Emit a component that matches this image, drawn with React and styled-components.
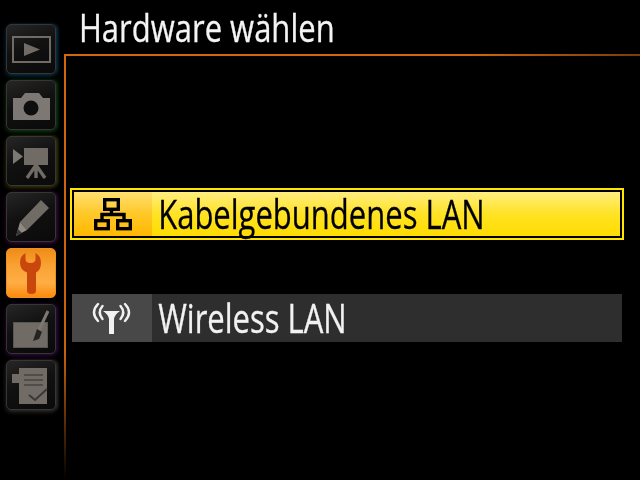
import React from 'react';
import styled, { createGlobalStyle, css } from 'styled-components';

const GlobalStyle = createGlobalStyle`
  html, body {
    margin: 0;
    padding: 0;
    background: #000;
    overflow: hidden;
  }
`;

const Screen = styled.div`
  width: 640px;
  height: 480px;
  display: flex;
  background: #000;
  font-family: "Open Sans", "Noto Sans", sans-serif;
`;

const Sidebar = styled.nav`
  width: 50px;
  padding: 24px 8px 0 6px;
  display: flex;
  flex-direction: column;
  gap: 6px;
`;

const Tab = styled.div`
  width: 50px;
  height: 50px;
  box-sizing: border-box;
  border-radius: 5px;
  border: 1px solid #383634;
  background: linear-gradient(160deg, #262626 0%, #111 45%, #0a0a0a 100%);
  box-shadow: 0 2px 4px ${(p) => p.$glow}, 2px 0 3px ${(p) => p.$glow};
  ${(p) => p.$active && css`
    border-color: #f09020;
    background: linear-gradient(180deg, #f08c18 0%, #f9a233 35%, #ffae45 70%, #fb8a0c 100%);
    box-shadow: none;
  `}
  svg { display: block; width: 48px; height: 48px; filter: blur(0.5px); }
`;

const Main = styled.main`
  flex: 1;
  display: flex;
  flex-direction: column;
`;

const Title = styled.h1`
  height: 54px;
  margin: 0;
  padding-left: 15px;
  box-sizing: border-box;
  color: #f4f4f4;
  font-size: 39px;
  font-weight: 400;
  line-height: 54px;
  white-space: nowrap;
  -webkit-text-stroke: 0.3px #f4f4f4;
  span {
    display: inline-block;
    transform: scaleX(0.795);
    transform-origin: left center;
  }
`;

const Panel = styled.section`
  flex: 1;
  padding: 134px 16px 0 6px;
  display: flex;
  flex-direction: column;
  gap: 54px;
  background:
    linear-gradient(90deg, #d2670f 0%, #d2670f 70%, #7a3c08 100%) top left / 100% 2px no-repeat,
    linear-gradient(180deg, #d2670f 0%, #c9620e 70%, #000 100%) top left / 2px 100% no-repeat;
`;

const SelectedFrame = styled.div`
  height: 52px;
  box-sizing: border-box;
  border: 2px solid #ffe500;
  background: #000;
  padding: 2px;
`;

const Row = styled.div`
  height: ${(p) => (p.$selected ? '44px' : '48px')};
  display: flex;
  align-items: stretch;
  margin: ${(p) => (p.$selected ? '0' : '0 2px')};
  background: ${(p) => (p.$selected
    ? 'linear-gradient(180deg, #ffed80 0%, #ffe324 50%, #ffdc00 100%)'
    : '#2e2e2e')};
`;

const IconCell = styled.div`
  width: ${(p) => (p.$selected ? '78px' : '80px')};
  flex: none;
  display: flex;
  align-items: center;
  justify-content: center;
  background: ${(p) => (p.$selected
    ? 'linear-gradient(180deg, #ffdf70 0%, #ffc828 50%, #ffb800 100%)'
    : '#484848')};
  svg { filter: blur(0.3px); }
`;

const Label = styled.span`
  display: inline-block;
  padding-left: 8px;
  color: ${(p) => (p.$selected ? '#000' : '#f2f2f2')};
  font-size: 40px;
  line-height: ${(p) => (p.$selected ? '44px' : '48px')};
  white-space: nowrap;
  -webkit-text-stroke: 0.3px ${(p) => (p.$selected ? '#000' : '#f2f2f2')};
  transform: scaleX(0.775);
  transform-origin: left center;
`;

const gray = '#716b66';

function PlayIcon() {
  return (
    <svg viewBox="0 0 48 48">
      <rect x="6" y="12" width="37" height="25" fill="none" stroke={gray} strokeWidth="2" />
      <path d="M17 18 L33 24.5 L17 31 Z" fill={gray} />
    </svg>
  );
}

function CameraIcon() {
  return (
    <svg viewBox="0 0 48 48">
      <path d="M6 17 H14 L18 12 H32 L36 17 H43 V39 H6 Z" fill="#7d7873" />
      <circle cx="24" cy="27" r="7.5" fill="#0e0e0e" />
    </svg>
  );
}

function MovieIcon() {
  return (
    <svg viewBox="0 0 48 48">
      <path d="M6 12 L16 19.5 L6 27 Z" fill="#7d7873" />
      <rect x="17" y="11" width="24" height="17" fill={gray} />
      <path d="M29 28 L20 41 M29 28 V41 M29 28 L38 41" stroke={gray} strokeWidth="3.4" fill="none" />
    </svg>
  );
}

function PencilIcon() {
  return (
    <svg viewBox="0 0 48 48">
      <path d="M13 29 L34 7 L42 15 L20 37 Z" fill={gray} />
      <path d="M13 29 L20 37 L9 43 Z" fill="#8f8982" />
      <path d="M11 36 L15 40 L9 43 Z" fill="#3a3836" />
    </svg>
  );
}

function WrenchIcon() {
  return (
    <svg viewBox="0 0 48 48">
      <path
        d="M18.5 4 V10 Q18.5 14 23.5 14 Q28.5 14 28.5 10 V4 Q34 7 34 13.5 Q34 21 29 23.5 V42 Q29 45 24.5 45 Q20 45 20 42 V23.5 Q13 21 13 13.5 Q13 7 18.5 4 Z"
        fill="#c9470c"
      />
    </svg>
  );
}

function TabletIcon() {
  return (
    <svg viewBox="0 0 48 48">
      <rect x="6.5" y="17.5" width="34" height="25" fill={gray} stroke="#5a5652" strokeWidth="1" />
      <path d="M41 6 L32 25" stroke="#7d7873" strokeWidth="3" fill="none" />
      <path d="M30 24 L35 27 L32 34 L26 36 Z" fill="#242322" />
    </svg>
  );
}

function ChecklistIcon() {
  return (
    <svg viewBox="0 0 48 48">
      <rect x="5" y="13" width="8" height="9" fill={gray} />
      <rect x="12" y="7" width="28" height="36" fill={gray} />
      <path d="M17 14 H36 M17 19 H36 M17 24 H36" stroke="#46433f" strokeWidth="1.5" />
      <path d="M22 34 L28 39 L40 28" stroke="#3a3835" strokeWidth="2" fill="none" />
    </svg>
  );
}

function LanIcon() {
  return (
    <svg width="38" height="34" viewBox="0 0 38 34" fill="none" stroke="#000" strokeWidth="3.4">
      <rect x="10.7" y="2.7" width="13.6" height="9.6" />
      <path d="M17.5 14 V17.5 M8 23 V17.5 H30 V23" />
      <rect x="1.7" y="23.7" width="12.6" height="8" />
      <rect x="23.7" y="23.7" width="12.6" height="8" />
    </svg>
  );
}

function AntennaIcon() {
  return (
    <svg width="40" height="36" viewBox="0 0 40 36">
      <path d="M11 11 H28 Q23 14 22 19 V34 H17 V19 Q16 14 11 11 Z" fill="#f2f2f2" />
      <g fill="none" stroke="#f2f2f2" strokeWidth="2.4" strokeLinecap="round">
        <path d="M6 4 Q-2 12.5 6 21" />
        <path d="M10.5 6 Q5 12.5 10.5 19" />
        <path d="M33 4 Q41 12.5 33 21" />
        <path d="M28.5 6 Q34 12.5 28.5 19" />
      </g>
    </svg>
  );
}

const tabs = [
  { Icon: PlayIcon, glow: '#0a2c3e' },
  { Icon: CameraIcon, glow: '#0c3410' },
  { Icon: MovieIcon, glow: '#2e300a' },
  { Icon: PencilIcon, glow: '#2e0a30' },
  { Icon: WrenchIcon, glow: 'transparent', active: true },
  { Icon: TabletIcon, glow: '#280a38' },
  { Icon: ChecklistIcon, glow: '#2c2a28' },
];

export default function App() {
  return (
    <Screen>
      <GlobalStyle />
      <Sidebar>
        {tabs.map(({ Icon, glow, active }, i) => (
          <Tab key={i} $glow={glow} $active={active}>
            <Icon />
          </Tab>
        ))}
      </Sidebar>
      <Main>
        <Title><span>Hardware wählen</span></Title>
        <Panel>
          <SelectedFrame>
            <Row $selected>
              <IconCell $selected><LanIcon /></IconCell>
              <Label $selected>Kabelgebundenes LAN</Label>
            </Row>
          </SelectedFrame>
          <Row>
            <IconCell><AntennaIcon /></IconCell>
            <Label>Wireless LAN</Label>
          </Row>
        </Panel>
      </Main>
    </Screen>
  );
}
